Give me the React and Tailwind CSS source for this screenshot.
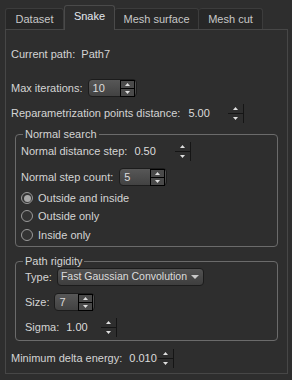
import React from 'react';

const Up = () => (
  <svg width="5" height="3" viewBox="0 0 5 3">
    <path d="M2.5 0L5 3H0z" fill="#e0e0e0" />
  </svg>
);

const Down = () => (
  <svg width="5" height="3" viewBox="0 0 5 3">
    <path d="M0 0H5L2.5 3z" fill="#e0e0e0" />
  </svg>
);

// boxed spin box, like the Qt dark style
function SpinBox({ value, className }) {
  return (
    <div
      className={
        'h-[18px] rounded-[4px] border border-[#1c1c1c] bg-gradient-to-b from-[#575757] to-[#424242] flex items-center justify-between pl-[4px] pr-[1px] ' +
        className
      }
    >
      <span className="text-[#dcdcdc]">{value}</span>
      <div className="flex flex-col">
        <div className="w-[15px] h-[9px] border border-black bg-[#4a4a4a] flex items-center justify-center">
          <Up />
        </div>
        <div className="w-[15px] h-[8px] border border-t-0 border-black bg-[#4a4a4a] flex items-center justify-center">
          <Down />
        </div>
      </div>
    </div>
  );
}

// flat spin box (double values)
function FlatSpin({ value, className }) {
  return (
    <div className={'h-[18px] flex items-center justify-between pl-[4px] ' + className}>
      <span className="text-[#dcdcdc]">{value}</span>
      <div className="w-[16px] h-[19px] border-r border-[#151515] flex flex-col">
        <div className="h-[9px] flex items-center justify-center">
          <Up />
        </div>
        <div className="h-[1px] bg-[#151515]" />
        <div className="h-[9px] flex items-center justify-center">
          <Down />
        </div>
      </div>
    </div>
  );
}

function Radio({ label, checked }) {
  return (
    <div className="h-[18px] flex items-center gap-[5px]">
      <div className="w-[12px] h-[12px] rounded-full border border-[#9a9a9a] bg-[#333] flex items-center justify-center">
        {checked && <div className="w-[7px] h-[7px] rounded-full bg-[#a8a8a8]" />}
      </div>
      <span>{label}</span>
    </div>
  );
}

function Group({ title, className, children }) {
  return (
    <div className={'relative mx-[9px] border border-[#6b6b6b] rounded-[4px] ' + className}>
      <div className="absolute left-[7px] top-[-8px] px-[2px] leading-[14px] bg-[#2e2e2e]">
        {title}
      </div>
      {children}
    </div>
  );
}

export default function App() {
  return (
    <div className="w-[292px] h-[380px] bg-[#2e2e2e] text-[#d4d4d4] text-[11px] font-['Liberation_Sans',Arial,sans-serif] pt-[5px] px-[5px]">
      {/* Tabs */}
      <div className="flex items-end h-[24px] relative z-10">
        <div className="w-[59px] h-[21px] bg-[#272727] border border-b-0 border-[#3c3c3c] rounded-t-[3px] flex items-center justify-center text-[#c8c8c8]">
          Dataset
        </div>
        <div className="w-[51px] h-[25px] bg-[#2e2e2e] border border-b-0 border-[#4a4a4a] rounded-t-[3px] flex items-center justify-center text-[#e4e8ee] -mb-[1px] pb-[3px]">
          Snake
        </div>
        <div className="w-[84px] h-[21px] bg-[#272727] border border-b-0 border-l-0 border-[#3c3c3c] rounded-t-[3px] flex items-center justify-center text-[#c8c8c8]">
          Mesh surface
        </div>
        <div className="w-[64px] h-[21px] bg-[#272727] border border-b-0 border-l-0 border-[#3c3c3c] rounded-t-[3px] flex items-center justify-center text-[#c8c8c8]">
          Mesh cut
        </div>
      </div>

      {/* Pane */}
      <div className="w-[283px] h-[345px] border border-[#474747] flex flex-col">
        <div className="h-[18px] mt-[15px] pl-[5px] flex items-center">Current path:&nbsp; Path7</div>

        <div className="h-[18px] mt-[16px] pl-[5px] flex items-center gap-[5px]">
          <span>Max iterations:</span>
          <SpinBox value="10" className="w-[49px]" />
        </div>

        <div className="h-[18px] mt-[7px] pl-[5px] flex items-center gap-[4px]">
          <span>Reparametrization points distance:</span>
          <FlatSpin value="5.00" className="w-[60px]" />
        </div>

        <Group title="Normal search" className="mt-[12px] pt-[7px] pb-[2px] pl-[5px]">
          <div className="h-[18px] flex items-center gap-[3px]">
            <span>Normal distance step:</span>
            <FlatSpin value="0.50" className="w-[61px]" />
          </div>
          <div className="h-[18px] mt-[8px] flex items-center gap-[6px]">
            <span>Normal step count:</span>
            <SpinBox value="5" className="w-[48px]" />
          </div>
          <div className="mt-[3px]">
            <Radio label="Outside and inside" checked />
          </div>
          <Radio label="Outside only" />
          <div className="mt-[1px]">
            <Radio label="Inside only" />
          </div>
        </Group>

        <Group title="Path rigidity" className="mt-[14px] pt-[6px] pb-[4px] pl-[9px]">
          <div className="h-[18px] flex items-center gap-[5px]">
            <span>Type:</span>
            <div className="w-[147px] h-[18px] rounded-[4px] border border-[#1c1c1c] bg-gradient-to-b from-[#525252] to-[#3e3e3e] flex items-center justify-between pl-[3px] pr-[4px] text-[#dcdcdc] whitespace-nowrap">
              <span className="text-[10.5px]">Fast Gaussian Convolution</span>
              <svg className="shrink-0" width="8" height="4" viewBox="0 0 8 4">
                <path d="M0 0H8L4 4z" fill="#c8c8c8" />
              </svg>
            </div>
          </div>
          <div className="h-[18px] mt-[7px] flex items-center gap-[5px]">
            <span>Size:</span>
            <SpinBox value="7" className="w-[41px]" />
          </div>
          <div className="h-[18px] mt-[7px] flex items-center gap-[3px]">
            <span>Sigma:</span>
            <FlatSpin value="1.00" className="w-[55px]" />
          </div>
        </Group>

        <div className="h-[18px] mt-[8px] pl-[5px] flex items-center gap-[3px]">
          <span>Minimum delta energy:</span>
          <FlatSpin value="0.010" className="w-[49px]" />
        </div>
      </div>
    </div>
  );
}
